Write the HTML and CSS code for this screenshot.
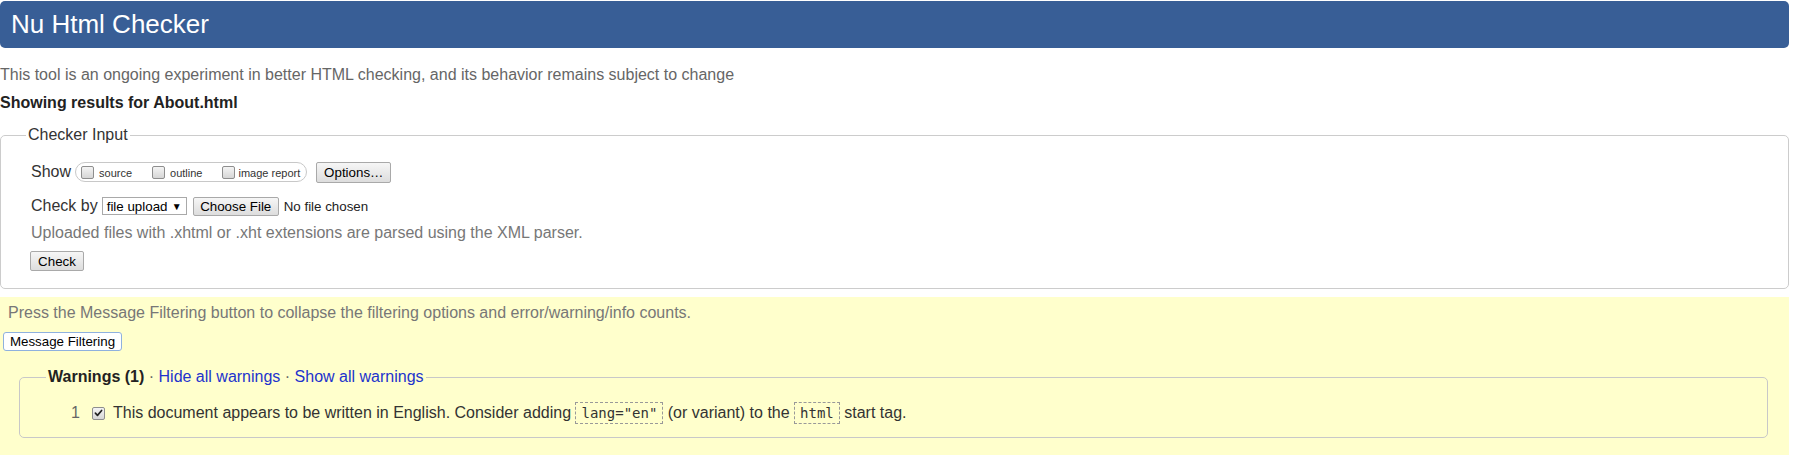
FILE: index.html
```html
<!DOCTYPE html>
<html lang="en">
<head>
<meta charset="utf-8">
<title>Nu Html Checker</title>
<link rel="stylesheet" href="styles.css">
</head>
<body>
<h1 class="masthead">Nu Html Checker</h1>
<p class="tagline">This tool is an ongoing experiment in better HTML checking, and its behavior remains subject to change</p>
<p class="showing">Showing results for About.html</p>

<fieldset class="checker">
  <legend class="checker-legend">Checker Input</legend>
  <div class="row row-show">
    <span class="lbl">Show</span>
    <span class="show-box">
      <span class="opt"><span class="cb"></span><span class="opt-text">source</span></span>
      <span class="opt"><span class="cb"></span><span class="opt-text">outline</span></span>
      <span class="opt opt-last"><span class="cb"></span><span class="opt-text">image report</span></span>
    </span>
    <span class="btn btn-options">Options…</span>
  </div>
  <div class="row row-check">
    <span class="lbl">Check by</span>
    <span class="select"><span>file upload</span><span class="arrow">▼</span></span>
    <span class="btn btn-file">Choose File</span>
    <span class="nofile">No file chosen</span>
  </div>
  <p class="hint">Uploaded files with .xhtml or .xht extensions are parsed using the XML parser.</p>
  <div class="row row-submit">
    <span class="btn btn-check">Check</span>
  </div>
</fieldset>

<section class="results">
  <p class="filter-note">Press the Message Filtering button to collapse the filtering options and error/warning/info counts.</p>
  <span class="btn btn-filter">Message Filtering</span>
  <fieldset class="warnings">
    <legend class="warn-legend"><b>Warnings (1)</b> · <a href="#">Hide all warnings</a> · <a href="#">Show all warnings</a></legend>
    <div class="msg">
      <span class="num">1</span>
      <span class="cb cb-checked"><svg viewBox="0 0 12 12" width="12" height="12"><path d="M2.6 6.2 L4.9 8.6 L9.4 3.2" fill="none" stroke="#222" stroke-width="1.8" stroke-linecap="round" stroke-linejoin="round"/></svg></span>
      <span class="msg-text">This document appears to be written in English. Consider adding <code class="code">lang="en"</code> (or variant) to the <code class="code">html</code> start tag.</span>
    </div>
  </fieldset>
</section>
</body>
</html>
```
FILE: styles.css
```css
html, body {
  background: #fff;
}
body {
  margin: 0;
  padding: 1px 4px 0 0;
  font-family: "Liberation Sans", Arial, sans-serif;
  font-size: 16px;
  color: #333;
}
.masthead {
  margin: 0;
  height: 47px;
  line-height: 46px;
  padding-left: 11px;
  background: #385e96;
  color: #fff;
  font-size: 26px;
  font-weight: normal;
  border-radius: 5px;
}
.tagline {
  margin: 17px 0 0;
  line-height: 20px;
  color: #666;
}
.showing {
  margin: 8px 0 0;
  line-height: 20px;
  font-weight: bold;
  color: #222;
}
.checker {
  margin: 12px 0 0;
  padding: 15px 0 17px 30px;
  border: 1px solid #ccc;
  border-radius: 5px;
  min-width: 0;
}
.checker-legend {
  padding: 0 2px;
  margin-left: -5px;
  line-height: 20px;
  color: #333;
}
.row {
  display: flex;
  align-items: center;
  height: 24px;
}
.row-check {
  margin-top: 10px;
}
.row-submit {
  margin-top: 8px;
  height: 20px;
}
.lbl {
  color: #333;
  line-height: 20px;
}
.show-box {
  display: flex;
  align-items: center;
  height: 18px;
  margin-left: 4px;
  padding: 0 6px 0 5px;
  border: 1px solid #c8c8c8;
  border-radius: 10px;
}
.opt {
  display: flex;
  align-items: center;
  margin-right: 20px;
}
.opt-last {
  margin-right: 0;
}
.opt-text {
  font-size: 11px;
  color: #333;
  margin-left: 5px;
  padding-top: 2px;
}
.opt-last .opt-text {
  margin-left: 3px;
}
.cb {
  display: inline-flex;
  align-items: center;
  justify-content: center;
  box-sizing: border-box;
  width: 13px;
  height: 13px;
  border: 1px solid #8e8e8e;
  border-radius: 2px;
  background: linear-gradient(#f4f4f4, #d6d6d6);
}
.btn {
  display: inline-flex;
  align-items: center;
  justify-content: center;
  box-sizing: border-box;
  font-size: 13.33px;
  color: #000;
  border: 1px solid #a9a9a9;
  border-radius: 2px;
  background: linear-gradient(#f6f6f6, #dddddd);
}
.btn-options {
  margin-left: 9px;
  width: 75px;
  height: 21px;
}
.select {
  display: inline-flex;
  align-items: center;
  box-sizing: border-box;
  height: 18px;
  width: 85px;
  margin-left: 4px;
  padding: 0 4px;
  border: 1px solid #a9a9a9;
  background: #fff;
  font-size: 13.33px;
  color: #000;
  justify-content: space-between;
}
.arrow {
  font-size: 10px;
}
.btn-file {
  margin-left: 6px;
  width: 86px;
  height: 19px;
}
.nofile {
  margin-left: 5px;
  font-size: 13.33px;
  color: #222;
}
.hint {
  margin: 5px 0 0;
  line-height: 20px;
  color: #777;
}
.btn-check {
  margin-left: -1px;
  width: 54px;
  height: 20px;
}
.results {
  margin-top: 8px;
  padding: 6px 0 20px 3px;
  background: #ffffcc;
}
.filter-note {
  margin: 0 0 0 5px;
  line-height: 20px;
  color: #777;
}
.btn-filter {
  margin-top: 9px;
  width: 119px;
  height: 19px;
  background: #fff;
  border: 1px solid #8fb1de;
  border-radius: 3px;
}
.warnings {
  margin: 16px 21px 0 16px;
  padding: 15px 0 13px 51px;
  border: 1px solid #c8c8c8;
  border-radius: 5px;
  min-width: 0;
}
.warn-legend {
  padding: 0 2px;
  margin-left: -25px;
  line-height: 20px;
  color: #666;
}
.warn-legend b {
  color: #222;
}
.warn-legend a {
  color: #2233cc;
  text-decoration: none;
}
.msg {
  display: flex;
  align-items: center;
  height: 22px;
}
.num {
  color: #666;
  width: 21px;
}
.cb-checked {
  margin-right: 8px;
}
.msg-text {
  line-height: 22px;
  color: #333;
}
.code {
  display: inline-block;
  font-family: "DejaVu Sans Mono", "Liberation Mono", monospace;
  font-size: 14px;
  line-height: 20px;
  padding: 0 5px;
  border: 1px dashed #999;
  color: #333;
  vertical-align: middle;
}
```
